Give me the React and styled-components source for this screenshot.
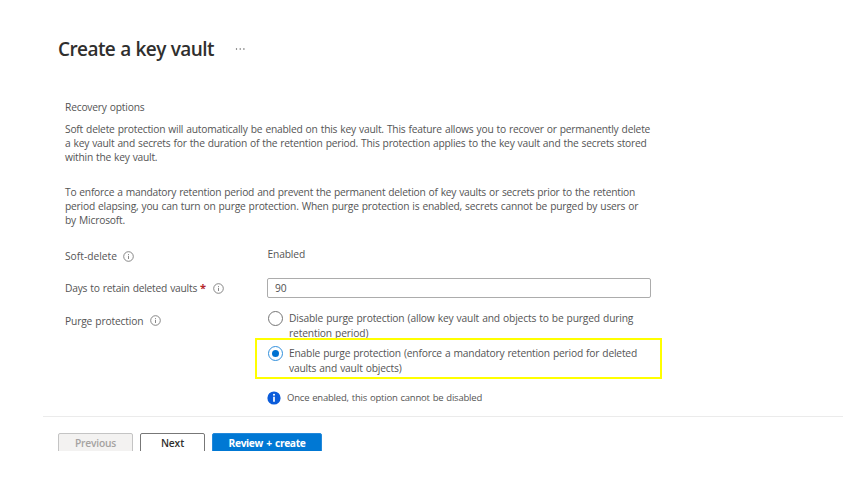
import React from 'react';
import styled, { createGlobalStyle } from 'styled-components';

const GlobalStyle = createGlobalStyle`
  * { box-sizing: border-box; }
  body {
    margin: 0;
    background: #fff;
    color: #555;
    font: 10.25px/14px "Open Sans", "Noto Sans", sans-serif;
    word-spacing: 0.6px;
    overflow: hidden;
  }
`;

const Page = styled.div`
  width: 843px;
  height: 451px;
  overflow: hidden;
  display: flex;
  flex-direction: column;
`;

const Header = styled.header`
  display: flex;
  align-items: center;
  gap: 21px;
  height: 30px;
  margin: 34px 0 0 58px;
`;

const Title = styled.h1`
  margin: 0;
  font-size: 19px;
  line-height: 30px;
  font-weight: 600;
  color: #302f2e;
  letter-spacing: ${(p) => p.$track}px;
  white-space: nowrap;
`;

const Body = styled.main`
  display: flex;
  flex-direction: column;
  margin: 36px 0 0 65px;
  height: 316px;
  flex: none;
`;

const Text = styled.span`
  display: block;
  letter-spacing: ${(p) => p.$track ?? -0.2}px;
  white-space: nowrap;
`;

const Paragraph = styled.div`
  margin-top: ${(p) => p.$top}px;
  line-height: 14.1px;
`;

const Form = styled.div`
  display: grid;
  grid-template-columns: 202px 384px;
  grid-template-rows: 31px 33px auto;
  margin-top: 20px;
`;

const Label = styled.div`
  display: flex;
  align-items: center;
  height: 14px;
  margin-top: ${(p) => p.$top}px;
`;

const Required = styled.span`
  color: #b3262b;
  font-size: 11px;
  font-weight: 700;
  margin: 0 7px 0 3px;
`;

const Value = styled.div`
  padding-left: 0.5px;
`;

const Input = styled.input`
  display: block;
  width: 384px;
  height: 20px;
  padding: 0 7px 1px;
  border: 1px solid #acacac;
  border-radius: 2px;
  color: #505050;
  background: #fff;
  font: inherit;
  letter-spacing: -0.19px;
  outline: none;
`;

const Options = styled.div`
  display: flex;
  flex-direction: column;
  gap: 7px;
`;

const Option = styled.div`
  position: relative;
  display: flex;
  gap: 6px;
  padding-left: 1px;
  height: 28px;
  line-height: 14.5px;
`;

const Radio = styled.span`
  flex: none;
  display: flex;
  align-items: center;
  justify-content: center;
  width: 15px;
  height: 15px;
  border-radius: 50%;
  border: 1px solid ${(p) => (p.$checked ? '#3290dc' : '#757575')};

  &::after {
    content: '';
    width: 7px;
    height: 7px;
    border-radius: 50%;
    background: ${(p) => (p.$checked ? '#0072d1' : 'transparent')};
  }
`;

const Highlight = styled.div`
  position: absolute;
  left: -12px;
  top: -8px;
  width: 407px;
  height: 41px;
  border: 2px solid #ffff00;
  pointer-events: none;
`;

const Note = styled.div`
  display: flex;
  align-items: center;
  gap: 6px;
  margin-top: 10px;
  height: 14px;
  font-size: 9.5px;
`;

const Footer = styled.footer`
  flex: none;
  display: flex;
  gap: 7px;
  margin-left: 43px;
  padding: 16px 0 0 15px;
  border-top: 1px solid #ebebeb;
`;

const palettes = {
  disabled: ['#f3f2f1', '#c4c4c4', '#a5a3a1'],
  plain: ['#ffffff', '#777777', '#302f2e'],
  primary: ['#0078d4', '#2389db', '#ffffff'],
};

const Button = styled.button`
  width: ${(p) => p.$width}px;
  height: 20px;
  padding: 0;
  border: 1px solid ${(p) => palettes[p.$kind][1]};
  border-radius: 2px;
  background: ${(p) => palettes[p.$kind][0]};
  color: ${(p) => palettes[p.$kind][2]};
  font: inherit;
  font-weight: ${(p) => p.$weight ?? 600};
  word-spacing: 1px;
  line-height: 18px;
  letter-spacing: ${(p) => p.$track}px;
`;

const InfoIcon = styled.svg`
  flex: none;
  width: 11px;
  height: 11px;
  margin-left: ${(p) => p.$gap ?? 0}px;
`;

const BadgeIcon = styled.svg`
  flex: none;
  width: 14px;
  height: 14px;
`;

const Info = ({ gap }) => (
  <InfoIcon $gap={gap} viewBox="0 0 11 11" fill="none" stroke="#6a6a6a">
    <circle cx="5.5" cy="5.5" r="4.8" strokeWidth="0.8" />
    <path d="M5.5 4.8v3.2M5.5 3v0.9" strokeWidth="0.8" />
  </InfoIcon>
);

const Dots = () => (
  <svg width="11" height="4" viewBox="0 0 11 4" fill="#555">
    <circle cx="1.5" cy="2" r="0.7" />
    <circle cx="5.2" cy="2" r="0.7" />
    <circle cx="8.9" cy="2" r="0.7" />
  </svg>
);

export default function App() {
  return (
    <>
      <GlobalStyle />
      <Page>
        <Header>
          <Title $track={-0.58}>Create a key vault</Title>
          <Dots />
        </Header>
        <Body>
          <Text>Recovery options</Text>
          <Paragraph $top={8}>
            <Text $track={-0.208}>Soft delete protection will automatically be enabled on this key vault. This feature allows you to recover or permanently delete</Text>
            <Text $track={-0.226}>a key vault and secrets for the duration of the retention period. This protection applies to the key vault and the secrets stored</Text>
            <Text $track={-0.23}>within the key vault.</Text>
          </Paragraph>
          <Paragraph $top={20.5}>
            <Text $track={-0.24}>To enforce a mandatory retention period and prevent the permanent deletion of key vaults or secrets prior to the retention</Text>
            <Text $track={-0.21}>period elapsing, you can turn on purge protection. When purge protection is enabled, secrets cannot be purged by users or</Text>
            <Text>by Microsoft.</Text>
          </Paragraph>
          <Form>
            <Label $top={2}>
              <Text $track={0}>Soft-delete</Text>
              <Info gap={6.5} />
            </Label>
            <Value>
              <Text $track={-0.15}>Enabled</Text>
            </Value>
            <Label $top={3}>
              <Text $track={-0.22}>Days to retain deleted vaults</Text>
              <Required>*</Required>
              <Info />
            </Label>
            <Input defaultValue="90" />
            <Label $top={2.5}>
              <Text $track={-0.16}>Purge protection</Text>
              <Info gap={6.5} />
            </Label>
            <Options>
              <Option>
                <Radio />
                <div>
                  <Text $track={-0.165}>Disable purge protection (allow key vault and objects to be purged during</Text>
                  <Text $track={-0.15}>retention period)</Text>
                </div>
              </Option>
              <Option>
                <Radio $checked />
                <div>
                  <Text $track={-0.2}>Enable purge protection (enforce a mandatory retention period for deleted</Text>
                  <Text $track={-0.17}>vaults and vault objects)</Text>
                </div>
                <Highlight />
              </Option>
              <Note>
                <BadgeIcon viewBox="0 0 14 14">
                  <circle cx="7" cy="7" r="6.6" fill="#0b5cda" />
                  <circle cx="7" cy="3.7" r="1.05" fill="#fff" />
                  <path d="M7 5.8v5" stroke="#fff" strokeWidth="1.7" />
                </BadgeIcon>
                <Text $track={-0.2}>Once enabled, this option cannot be disabled</Text>
              </Note>
            </Options>
          </Form>
        </Body>
        <Footer>
          <Button $kind="disabled" $width={75} $track={-0.2}>Previous</Button>
          <Button $kind="plain" $width={65} $track={-0.1}>Next</Button>
          <Button $kind="primary" $width={110} $weight={700} $track={-0.38}>Review + create</Button>
        </Footer>
      </Page>
    </>
  );
}
